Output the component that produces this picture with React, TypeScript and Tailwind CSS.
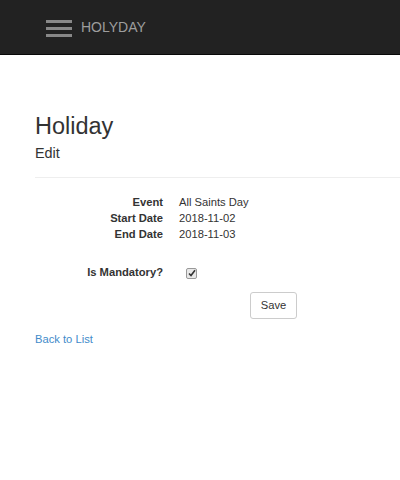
import React from "react";

export default function App() {
  const font = { fontFamily: '"Liberation Sans", Arial, sans-serif' };
  return (
    <div className="w-[400px] h-[480px] bg-white text-[#333] overflow-hidden" style={font}>
      <nav className="h-[55px] bg-[#222] border-b border-[#080808] flex items-start">
        <div className="flex flex-col gap-[4px] ml-[46px] mt-[20px]">
          <div className="w-[26px] h-[3px] bg-[#888]" />
          <div className="w-[26px] h-[3px] bg-[#888]" />
          <div className="w-[26px] h-[3px] bg-[#888]" />
        </div>
        <span className="ml-[9px] mt-[19px] text-[14px] leading-[16px] text-[#9d9d9d]">HOLYDAY</span>
      </nav>
      <div className="pl-[35px]">
        <h2 className="mt-[58px] text-[23.5px] leading-[26px] font-normal">Holiday</h2>
        <h4 className="mt-[6px] text-[14.4px] leading-[16px] font-normal">Edit</h4>
        <div className="mt-[16px] h-[1px] bg-[#eee] w-[400px]" />
        <dl className="mt-[16px] text-[11.2px] leading-[16px]">
          {[
            ["Event", "All Saints Day"],
            ["Start Date", "2018-11-02"],
            ["End Date", "2018-11-03"],
          ].map(([k, v]) => (
            <div key={k} className="flex">
              <dt className="w-[128px] text-right font-bold">{k}</dt>
              <dd className="ml-[16px]">{v}</dd>
            </div>
          ))}
        </dl>
        <div className="mt-[22px] flex items-center text-[11.2px] leading-[16px]">
          <span className="w-[128px] text-right font-bold">Is Mandatory?</span>
          <span className="ml-[23px] mt-[2px] w-[11px] h-[11px] rounded-[2px] border border-[#999] bg-[#e8e8e8] flex items-center justify-center">
            <svg width="8" height="8" viewBox="0 0 8 8">
              <path d="M1 4.5 L3 6.5 L7 1.2" stroke="#333" strokeWidth="1.6" fill="none" />
            </svg>
          </span>
        </div>
        <div className="mt-[12px] pl-[215px]">
          <button className="w-[47px] h-[27px] border border-[#ccc] rounded-[3px] bg-white text-[11.2px] text-[#333]" style={font}>
            Save
          </button>
        </div>
        <a className="block mt-[12px] text-[11.2px] leading-[16px] text-[#428bca]" href="#">Back to List</a>
      </div>
    </div>
  );
}
